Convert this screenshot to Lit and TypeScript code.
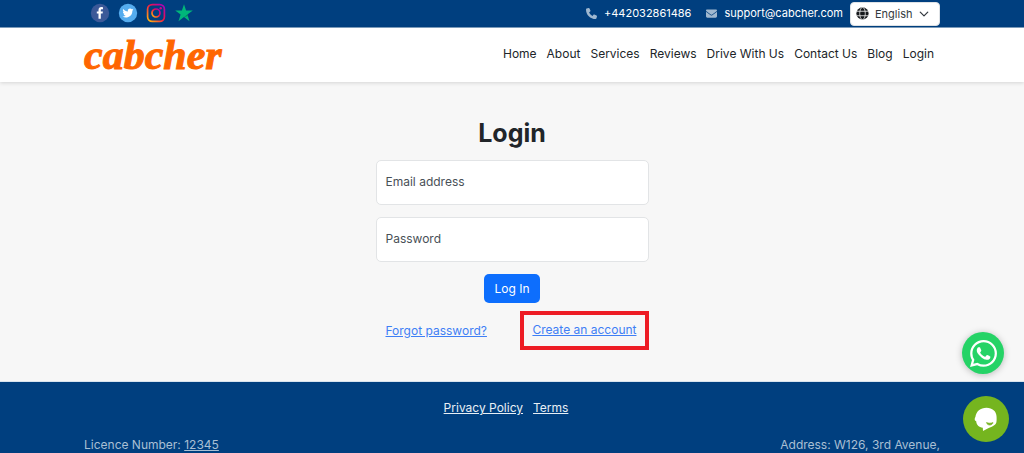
import { LitElement, html, css, svg } from "lit";
import { customElement, state } from "lit/decorators.js";

const NAV = ["Home", "About", "Services", "Reviews", "Drive With Us", "Contact Us", "Blog", "Login"];

const facebookIcon = svg`<svg viewBox="0 0 20 20" aria-hidden="true">
  <circle cx="10" cy="10" r="9.200" fill="#3b5998"/>
  <path fill="#fff" d="M8.500 15.800v-5.200H6.800V8.400h1.700V7.100c0-1.900 1.100-3 2.900-3l1.600.1v2h-1.100c-.8 0-1.100.4-1.100 1v1.200h2.100l-.3 2.200h-1.800v5.200z"/>
</svg>`;

const twitterIcon = svg`<svg viewBox="0 0 20 20" aria-hidden="true">
  <circle cx="10" cy="10" r="9.200" fill="#55acee"/>
  <path fill="#fff" d="M15.500 6.600c-.4.2-.8.300-1.300.4.500-.3.800-.7 1-1.200-.4.200-.9.400-1.400.5a2.250 2.250 0 0 0-3.900 2.100C8 8.300 6.400 7.400 5.200 6c-.6 1-.3 2.300.7 3-.4 0-.7-.1-1-.3 0 1.100.7 2 1.800 2.300-.3.100-.7.100-1 0 .3.900 1.100 1.600 2.100 1.600a4.600 4.600 0 0 1-3.300.9c3.700 2.300 9.900.5 9.900-5.800.4-.3.800-.7 1.100-1.100z"/>
</svg>`;

const instagramIcon = svg`<svg viewBox="0 0 20 20" aria-hidden="true">
  <defs><linearGradient id="ig" x1="0" y1="1" x2="1" y2="0">
    <stop offset="0" stop-color="#ffc107"/><stop offset=".3" stop-color="#f9622b"/>
    <stop offset=".55" stop-color="#ee1248"/><stop offset="1" stop-color="#a000c8"/>
  </linearGradient></defs>
  <g fill="none" stroke="url(#ig)" stroke-width="1.700">
    <rect x="1.600" y="1.600" width="16.800" height="16.800" rx="4.600"/>
    <circle cx="10" cy="10" r="4"/>
  </g>
  <circle cx="14.700" cy="5.300" r="1.200" fill="#c80a8c"/>
</svg>`;

const starIcon = svg`<svg viewBox="0 0 20 20" aria-hidden="true">
  <path fill="#00b67a" d="M10 1.200l2.100 6.300h6.700l-5.400 3.900 2.100 6.800-5.500-4.200-5.500 4.200 2.100-6.800-5.400-3.900h6.700z"/>
  <path fill="#00845b" d="M13.400 11.400l.6 1.700-4 .9z"/>
</svg>`;

const phoneIcon = svg`<svg viewBox="0 0 512 512" aria-hidden="true"><path fill="currentColor" d="M164.900 24.600c-7.700-18.600-28-28.500-47.400-23.200l-88 24C12.100 30.200 0 46 0 64c0 247.400 200.600 448 448 448 18 0 33.800-12.100 38.600-29.500l24-88c5.300-19.400-4.600-39.700-23.200-47.400l-96-40c-16.300-6.800-35.200-2.100-46.300 11.600L304.700 368C234.300 334.700 177.300 277.700 144 207.300l49.300-40.300c13.700-11.200 18.400-30 11.600-46.300z"/></svg>`;

const mailIcon = svg`<svg viewBox="0 0 512 512" aria-hidden="true"><path fill="currentColor" d="M48 64C21.500 64 0 85.500 0 112c0 15.100 7.100 29.300 19.200 38.400l217.600 163.200c11.400 8.500 27 8.500 38.400 0l217.600-163.200c12.100-9.100 19.200-23.300 19.200-38.400 0-26.500-21.500-48-48-48zM0 176v208c0 35.300 28.700 64 64 64h384c35.300 0 64-28.700 64-64V176L294.400 339.200c-22.800 17.100-54 17.100-76.800 0z"/></svg>`;

const globeIcon = svg`<svg class="globe" viewBox="0 0 14 14" aria-hidden="true">
  <circle cx="7" cy="7" r="6.600" fill="#16191c"/>
  <g fill="none" stroke="#fff" stroke-width=".8"><ellipse cx="7" cy="7" rx="3" ry="6.600"/><path d="M.6 4.600h12.800M.6 9.400h12.800"/></g>
</svg>`;

const chevronIcon = svg`<svg class="chevron" viewBox="0 0 16 16" aria-hidden="true"><path d="M2 5l6 6 6-6" fill="none" stroke="#343a40" stroke-width="2" stroke-linecap="round" stroke-linejoin="round"/></svg>`;

const whatsappIcon = svg`<svg viewBox="0 0 24 24" aria-hidden="true"><path fill="#fff" d="M17.472 14.382c-.297-.149-1.758-.867-2.030-.967-.273-.099-.471-.148-.670.150-.197.297-.767.966-.940 1.164-.173.199-.347.223-.644.075-.297-.150-1.255-.463-2.390-1.475-.883-.788-1.480-1.761-1.653-2.059-.173-.297-.018-.458.130-.606.134-.133.298-.347.446-.520.149-.174.198-.298.298-.497.099-.198.050-.371-.025-.520-.075-.149-.669-1.612-.916-2.207-.242-.579-.487-.500-.669-.510-.173-.008-.371-.010-.570-.010-.198 0-.520.074-.792.372-.272.297-1.040 1.016-1.040 2.479 0 1.462 1.065 2.875 1.213 3.074.149.198 2.096 3.200 5.077 4.487.709.306 1.262.489 1.694.625.712.227 1.360.195 1.871.118.571-.085 1.758-.719 2.006-1.413.248-.694.248-1.289.173-1.413-.074-.124-.272-.198-.570-.347m-5.421 7.403h-.004a9.870 9.870 0 0 1-5.031-1.378l-.361-.214-3.741.982.998-3.648-.235-.374a9.860 9.860 0 0 1-1.510-5.260c.001-5.450 4.436-9.884 9.888-9.884 2.640 0 5.122 1.030 6.988 2.898a9.825 9.825 0 0 1 2.893 6.994c-.003 5.450-4.437 9.884-9.885 9.884m8.413-18.297A11.815 11.815 0 0 0 12.050 0C5.495 0 .160 5.335.157 11.892c0 2.096.547 4.142 1.588 5.945L.057 24l6.305-1.654a11.882 11.882 0 0 0 5.683 1.448h.005c6.554 0 11.890-5.335 11.893-11.893a11.821 11.821 0 0 0-3.480-8.413z"/></svg>`;

const chatIcon = svg`<svg viewBox="0 0 24 24" aria-hidden="true">
  <path fill="#fff" d="M12.500.8c6 0 9.700 3.600 10 8.200.2 2.500.2 4.700-.1 6.300-.8 3.300-5.400 4.700-8.200 5.900L9 24l-.2-3.300C5 20.300 2.400 18 2.200 14.300L1 13.400c-.5-.9-.3-2.600.4-3.500C2.200 4.500 6.300.8 12.500.8z"/>
  <path d="M12.500 15.600c2 .8 4.500.8 6.500 0-.6 3.200-5.800 3.200-6.500 0z" fill="#75b51f" stroke="#75b51f" stroke-width=".7"/>
</svg>`;

@customElement("app-root")
export class AppRoot extends LitElement {
  @state() private email = "";
  @state() private password = "";

  static styles = css`
    :host {
      display: flex;
      flex-direction: column;
      min-height: 100vh;
      box-sizing: border-box;
      background: #f7f7f7;
      color: #212529;
      font: 12px/18px Inter, "Liberation Sans", sans-serif;
    }
    * { box-sizing: border-box; }
    svg { display: block; }
    .container {
      width: 100%;
      max-width: 880px;
      margin: 0 auto;
      padding: 0 12px;
      display: flex;
      align-items: center;
      justify-content: space-between;
    }
    .topbar { background: #003f7f; border-bottom: 1px solid #7f9fbf; color: #fff; font-size: 11px; }
    .topbar .container { height: 27px; }
    .social { display: flex; gap: 8px; padding: 0 0 1px 6px; }
    .social svg { width: 20px; height: 20px; }
    .contact { display: flex; align-items: center; gap: 15px; }
    .contact-links { display: flex; gap: 15px; padding-bottom: 1px; }
    .contact a { display: flex; align-items: center; gap: 7px; color: inherit; text-decoration: none; }
    .contact a svg { width: 11px; height: 11px; color: #9fb8d0; }
    .contact { gap: 7px; }
    .language { display: grid; align-items: center; width: 90px; height: 24px; }
    .language > * { grid-area: 1 / 1; }
    .language select {
      appearance: none;
      width: 100%;
      height: 100%;
      margin: 0;
      padding: 0 20px 0 24px;
      border: 1px solid #dee2e6;
      border-radius: 4px;
      background: #fff;
      color: #343a40;
      font: inherit;
    }
    .globe, .chevron { z-index: 1; pointer-events: none; }
    .globe { width: 13px; height: 13px; margin-left: 6px; }
    .chevron { width: 10px; height: 10px; justify-self: end; margin-right: 11px; }
    .header { background: #fff; box-shadow: 0 1px 4px rgba(0, 0, 0, 0.14); }
    .header .container { height: 54px; }
    .logo {
      color: #ff6600;
      font: italic bold 42px/48px "Liberation Serif", serif;
      -webkit-text-stroke: 1px #ff6600;
      text-decoration: none;
    }
    .nav { display: flex; gap: 10px; padding: 0 6px 2px 0; }
    .nav a { color: #212529; text-decoration: none; }
    .main { flex: 1; display: flex; flex-direction: column; align-items: center; padding: 33px 12px 31px; }
    .login { width: 100%; max-width: 273px; display: flex; flex-direction: column; align-items: center; }
    h1 { margin: 0 0 9px; font-size: 25px; line-height: 36px; font-weight: 700; }
    .field { display: grid; width: 100%; height: 45px; margin-bottom: 12px; align-items: center; }
    .field > * { grid-area: 1 / 1; }
    .field label { z-index: 1; padding: 0 10px 2px; color: #495057; pointer-events: none; }
    .field input {
      width: 100%;
      height: 45px;
      margin: 0;
      padding: 12px 10px 4px;
      border: 1px solid #e2e4e6;
      border-radius: 5px;
      background: #fff;
      font: inherit;
    }
    .field.filled label { align-self: start; font-size: 10px; }
    .submit {
      height: 29px;
      margin-bottom: 8px;
      padding: 0 10px;
      border: 0;
      border-radius: 5px;
      background: #0d6efd;
      color: #fff;
      font: inherit;
    }
    .links { display: flex; width: 100%; align-items: center; justify-content: space-between; padding-left: 10px; }
    .links a { color: #3f7ff5; white-space: nowrap; }
    .highlight { padding: 6px 8px 7px; border: 4px solid #ed1c24; }
    .footer { background: #003f7f; border-top: 1px solid #d8e4ee; color: #a9bfd4; }
    .legal { display: flex; justify-content: center; gap: 10px; padding: 17px 12px 19px 0; }
    .legal a { color: #e8eff5; }
    .footer .container a { color: inherit; }
    .bubble {
      position: fixed;
      display: grid;
      place-items: center;
      border-radius: 50%;
    }
    .whatsapp { right: 20px; bottom: 79px; width: 42px; height: 42px; background: #25d366; box-shadow: 0 1px 7px rgba(0, 0, 0, 0.25); }
    .whatsapp svg { width: 27px; height: 27px; }
    .chat { right: 15px; bottom: 11px; width: 46px; height: 46px; padding: 0; border: 0; background: #75b51f; }
    .chat svg { width: 24px; height: 24px; }
  `;

  render() {
    return html`
      <div class="topbar">
        <div class="container">
          <div class="social">
            <a href="#facebook" aria-label="Facebook">${facebookIcon}</a>
            <a href="#twitter" aria-label="Twitter">${twitterIcon}</a>
            <a href="#instagram" aria-label="Instagram">${instagramIcon}</a>
            <a href="#trustpilot" aria-label="Trustpilot">${starIcon}</a>
          </div>
          <div class="contact">
            <div class="contact-links">
              <a href="tel:+442032861486">${phoneIcon}+442032861486</a>
              <a href="mailto:support@cabcher.com">${mailIcon}support@cabcher.com</a>
            </div>
            <div class="language">
              <select aria-label="Language"><option>English</option></select>
              ${globeIcon}${chevronIcon}
            </div>
          </div>
        </div>
      </div>
      <header class="header">
        <div class="container">
          <a class="logo" href="#home">cabcher</a>
          <nav class="nav">${NAV.map((item) => html`<a href="#">${item}</a>`)}</nav>
        </div>
      </header>
      <main class="main">
        <form class="login" @submit=${(e: Event) => e.preventDefault()}>
          <h1>Login</h1>
          <div class="field ${this.email ? "filled" : ""}">
            <input id="email" type="email" .value=${this.email}
              @input=${(e: InputEvent) => (this.email = (e.target as HTMLInputElement).value)} />
            <label for="email">Email address</label>
          </div>
          <div class="field ${this.password ? "filled" : ""}">
            <input id="password" type="password" .value=${this.password}
              @input=${(e: InputEvent) => (this.password = (e.target as HTMLInputElement).value)} />
            <label for="password">Password</label>
          </div>
          <button class="submit" type="submit">Log In</button>
          <div class="links">
            <a href="#forgot">Forgot password?</a>
            <div class="highlight"><a href="#register">Create an account</a></div>
          </div>
        </form>
      </main>
      <footer class="footer">
        <div class="legal"><a href="#privacy">Privacy Policy</a><a href="#terms">Terms</a></div>
        <div class="container">
          <span>Licence Number: <a href="#licence">12345</a></span>
          <span>Address: W126, 3rd Avenue,</span>
        </div>
      </footer>
      <a class="bubble whatsapp" href="#whatsapp" aria-label="WhatsApp">${whatsappIcon}</a>
      <button class="bubble chat" type="button" aria-label="Chat">${chatIcon}</button>
    `;
  }
}
